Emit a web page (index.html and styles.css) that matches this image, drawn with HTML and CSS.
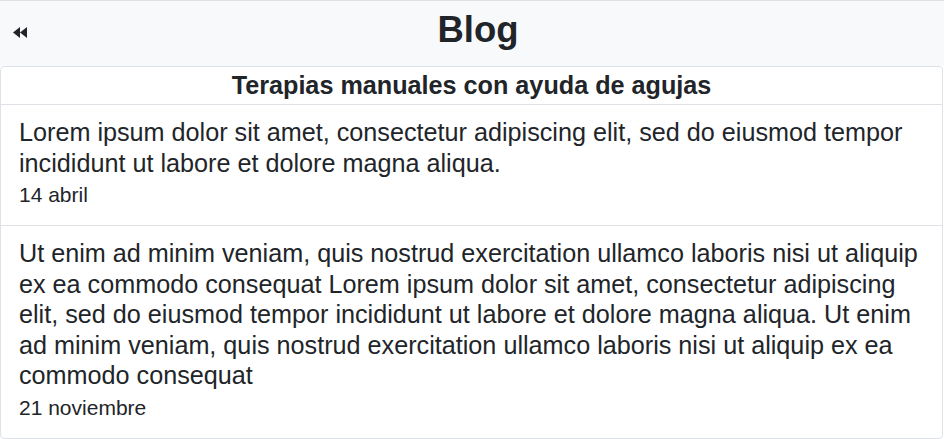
FILE: index.html
```html
<!DOCTYPE html>
<html lang="es">
<head>
<meta charset="utf-8">
<title>Blog</title>
<link rel="stylesheet" href="styles.css">
</head>
<body>
<header class="topbar">
  <button class="back" aria-label="Volver">
    <svg width="16" height="14" viewBox="0 0 16 14"><polygon points="1,6.5 8,1 8,12" fill="#212529"/><polygon points="8,6.5 15,1 15,12" fill="#212529"/></svg>
  </button>
  <h1 class="title">Blog</h1>
</header>
<section class="card">
  <h4 class="card-header">Terapias manuales con ayuda de agujas</h4>
  <ul class="list">
    <li class="item">
      <p class="text">Lorem ipsum dolor sit amet, consectetur adipiscing elit, sed do eiusmod tempor incididunt ut labore et dolore magna aliqua.</p>
      <p class="date">14 abril</p>
    </li>
    <li class="item">
      <p class="text">Ut enim ad minim veniam, quis nostrud exercitation ullamco laboris nisi ut aliquip ex ea commodo consequat Lorem ipsum dolor sit amet, consectetur adipiscing elit, sed do eiusmod tempor incididunt ut labore et dolore magna aliqua. Ut enim ad minim veniam, quis nostrud exercitation ullamco laboris nisi ut aliquip ex ea commodo consequat</p>
      <p class="date">21 noviembre</p>
    </li>
  </ul>
</section>
</body>
</html>
```

FILE: styles.css
```css
* { box-sizing: border-box; }
html, body {
  margin: 0;
  padding: 0;
  background: #fff;
  color: #212529;
  font-family: "Liberation Sans", Arial, sans-serif;
}
.topbar {
  display: flex;
  align-items: center;
  height: 66px;
  padding: 0 12px;
  background: #f8f9fa;
  border-top: 1px solid #dee2e6;
}
.back {
  width: 28px;
  height: 30px;
  padding: 0;
  border: 0;
  background: transparent;
  display: flex;
  align-items: center;
  justify-content: flex-start;
  margin-top: -2px;
}
.back svg { display: block; }
.title {
  flex: 1;
  margin: 0;
  padding-right: 16px;
  padding-bottom: 8px;
  text-align: center;
  font-size: 36.5px;
  font-weight: 700;
  line-height: 44px;
}
.card {
  width: 943px;
  border: 1px solid #dee2e6;
  border-radius: 4px;
  background: #fff;
}
.card-header {
  margin: 0;
  padding: 3px 20px 4px;
  text-align: center;
  font-size: 25.2px;
  font-weight: 700;
  line-height: 30px;
  border-bottom: 1px solid #dee2e6;
}
.list {
  list-style: none;
  margin: 0;
  padding: 0;
}
.item {
  padding: 12px 20px 15px 18px;
  border-bottom: 1px solid #dee2e6;
}
.item:last-child { border-bottom: 0; }
.text {
  margin: 0;
  font-size: 25.2px;
  line-height: 30.5px;
}
.date {
  margin: 2px 0 0;
  font-size: 21px;
  line-height: 30px;
}
```
